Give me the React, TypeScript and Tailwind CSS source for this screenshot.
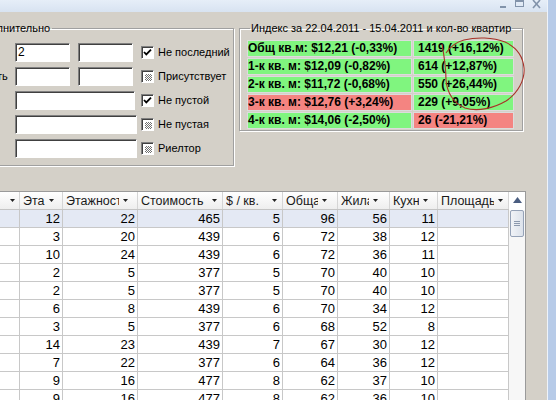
import React from "react"

const rows: number[][] = [
  [12, 22, 465, 5, 96, 56, 11],
  [3, 20, 439, 6, 72, 38, 12],
  [10, 24, 439, 6, 72, 36, 11],
  [2, 5, 377, 5, 70, 40, 10],
  [2, 5, 377, 5, 70, 40, 10],
  [6, 8, 439, 6, 70, 34, 12],
  [3, 5, 377, 6, 68, 52, 8],
  [14, 23, 439, 7, 67, 30, 12],
  [7, 22, 377, 6, 64, 36, 12],
  [9, 16, 477, 8, 62, 37, 10],
  [9, 16, 477, 8, 62, 36, 10],
]

// header arrows sit at slightly different offsets in every column
const cols = [
  { label: "", w: "w-[20px]", pr: "pr-[4px]" },
  { label: "Эта", w: "w-[43px]", pr: "pr-[8px]" },
  { label: "Этажность", w: "w-[75px]", pr: "pr-[9px]" },
  { label: "Стоимость", w: "w-[85px]", pr: "pr-[5px]" },
  { label: "$ / кв.", w: "w-[60px]", pr: "pr-[5px]" },
  { label: "Общая", w: "w-[55px]", pr: "pr-[10px]" },
  { label: "Жилая", w: "w-[52px]", pr: "pr-[11px]" },
  { label: "Кухня", w: "w-[48px]", pr: "pr-[9px]" },
  { label: "Площадь", w: "w-[71px]", pr: "pr-[5px]" },
]

const index = [
  { left: "Общ кв.м: $12,21 (-0,33%)", right: "1419 (+16,12%)", lr: false, rr: false },
  { left: "1-к кв. м: $12,09 (-0,82%)", right: "614 (+12,87%)", lr: false, rr: false },
  { left: "2-к кв. м: $11,72 (-0,68%)", right: "550 (+26,44%)", lr: false, rr: false },
  { left: "3-к кв. м: $12,76 (+3,24%)", right: "229 (+9,05%)", lr: true, rr: false },
  { left: "4-к кв. м: $14,06 (-2,50%)", right: "26 (-21,21%)", lr: false, rr: true },
]

const Arrow = () => (
  <svg width="5" height="3" viewBox="0 0 5 3" className="shrink-0 ml-[4px]">
    <polygon points="0,0 5,0 2.5,3" fill="#222" />
  </svg>
)

const TextBox = ({ w, value }: { w: string; value?: string }) => (
  <div
    className={`${w} h-[19px] bg-white border border-t-[#808080] border-l-[#808080] border-b-white border-r-white shadow-[inset_1px_1px_0_#404040] pl-[2px] pt-[1px] text-[12px] leading-[14px]`}
  >
    {value}
  </div>
)

const Check = ({ state }: { state: "on" | "mixed" }) => (
  <div className="w-[13px] h-[13px] shrink-0 bg-white border border-t-[#808080] border-l-[#808080] border-b-white border-r-white shadow-[inset_1px_1px_0_#404040] flex items-center justify-center">
    {state === "on" ? (
      <svg width="9" height="9" viewBox="0 0 9 9">
        <path d="M1 4 L3.3 6.4 L8 1.6" stroke="#000" strokeWidth="1.8" fill="none" />
      </svg>
    ) : (
      <div className="w-[7px] h-[7px] ml-[1px] mt-[1px] bg-[repeating-conic-gradient(#707070_0_25%,#ffffff_0_50%)] bg-[length:2px_2px]" />
    )}
  </div>
)

const FilterRow = ({
  label,
  wide,
  value,
  state,
  text,
}: {
  label: string
  wide?: string
  value?: string
  state: "on" | "mixed"
  text: string
}) => (
  <div className="flex items-center h-[19px]">
    <span className="w-[68px] shrink-0 pl-[6px] text-[11px] whitespace-nowrap">{label}</span>
    <div className="w-[126px] shrink-0 flex gap-[8px]">
      {wide ? (
        <TextBox w={wide} />
      ) : (
        <>
          <TextBox w="w-[55px]" value={value} />
          <TextBox w="w-[55px]" />
        </>
      )}
    </div>
    <Check state={state} />
    <span className="ml-[4px] text-[11px] whitespace-nowrap">{text}</span>
  </div>
)

export default function App() {
  return (
    <div className="relative w-[556px] h-[400px] overflow-hidden flex bg-[#d4d0c8] text-black font-['Liberation_Sans',Arial,sans-serif]">
      <div className="flex-1 min-w-0 flex flex-col">
        {/* window caption remains */}
        <div className="h-[12px] shrink-0 bg-gradient-to-b from-[#e6eef8] to-[#d8e3f1] flex justify-end pr-[2px]">
          <svg width="50" height="12" viewBox="0 0 50 12">
            <rect x="5" y="6" width="6" height="2" fill="#8293aa" />
            <rect x="20.5" y="0.5" width="8" height="6" stroke="#8293aa" fill="none" />
            <rect x="20" y="0" width="9" height="2" fill="#8293aa" />
            <path d="M38 0 L45 8 M45 0 L38 8" stroke="#8293aa" strokeWidth="1.6" />
          </svg>
        </div>

        <div className="flex items-start pt-[9px] shrink-0">
          <fieldset className="ml-[-64px] w-[298px] shrink-0 border border-[#a0a0a0] shadow-[inset_1px_1px_0_#fff,1px_1px_0_#fff] pl-[10px] pb-[7px]">
            <legend className="ml-[22px] px-[2px] text-[11px] leading-[14px]">Дополнительно</legend>
            <div className="flex flex-col gap-[5px] pt-[8px]">
              <FilterRow label="Этаж" value="2" state="on" text="Не последний" />
              <FilterRow label="Этажность" state="mixed" text="Присутствует" />
              <FilterRow label="Телефон" wide="w-[120px]" state="on" text="Не пустой" />
              <FilterRow label="Улица" wide="w-[122px]" state="mixed" text="Не пустая" />
              <FilterRow label="Агент" wide="w-[122px]" state="mixed" text="Риелтор" />
            </div>
          </fieldset>

          <fieldset className="ml-[5px] w-[284px] shrink-0 border border-[#a0a0a0] shadow-[inset_1px_1px_0_#fff,1px_1px_0_#fff] px-[7px] pb-[1px]">
            <legend className="ml-[3px] px-[1px] text-[11px] leading-[14px] whitespace-nowrap">
              Индекс за 22.04.2011 - 15.04.2011 и кол-во квартир
            </legend>
            <div className="grid grid-cols-[165px_101px] gap-[1px] pt-[5px]">
              {index.map((r) => (
                <React.Fragment key={r.left}>
                  <div
                    className={`h-[17px] border border-[#dcdcdc] text-[12px] font-bold leading-[15px] whitespace-nowrap ${
                      r.lr ? "bg-[#f48481]" : "bg-[#80f57f]"
                    }`}
                  >
                    {r.left}
                  </div>
                  <div
                    className={`h-[17px] border border-[#dcdcdc] pl-[4px] text-[12px] font-bold leading-[15px] whitespace-nowrap ${
                      r.rr ? "bg-[#f48481]" : "bg-[#80f57f]"
                    }`}
                  >
                    {r.right}
                  </div>
                </React.Fragment>
              ))}
            </div>
          </fieldset>
        </div>

        {/* grid */}
        <div className="mt-[25px] w-[526px] flex border-t border-r border-[#9a9a9a] bg-white text-[13px]">
          <div className="flex flex-col">
            <div className="flex h-[18px] border-b border-[#c4c4c4] bg-gradient-to-b from-white to-[#eeeeee] text-[12.5px]">
              {cols.map((c, i) => (
                <div
                  key={i}
                  className={`${c.w} ${c.pr} flex items-center justify-end pl-[3px] border-r border-[#d5d5d5] text-[#1a1a1a]`}
                >
                  <span className="flex-1 min-w-0 overflow-hidden whitespace-nowrap leading-[16px]">{c.label}</span>
                  <Arrow />
                </div>
              ))}
            </div>
            {rows.map((r, ri) => (
              <div
                key={ri}
                className={`flex h-[18px] shrink-0 border-b border-[#c8c8c8] ${ri === 0 ? "bg-[#e4e9f4]" : ""}`}
              >
                <div className="w-[20px] border-r border-[#c8c8c8]" />
                {r.map((v, ci) => (
                  <div
                    key={ci}
                    className={`${cols[ci + 1].w} border-r border-[#c8c8c8] text-right pr-[2px] leading-[17px]`}
                  >
                    {v}
                  </div>
                ))}
                <div className="w-[71px] border-r border-[#c8c8c8]" />
              </div>
            ))}
          </div>
          {/* scrollbar */}
          <div className="w-[16px] shrink-0 flex flex-col bg-[#f7f7f7]">
            <div className="h-[18px] flex items-start justify-center pt-[5px] bg-white">
              <svg width="9" height="6" viewBox="0 0 9 6">
                <polygon points="0,6 9,6 4.5,0" fill="#4a5d80" />
              </svg>
            </div>
            <div className="mx-[1px] h-[27px] rounded-[2px] border border-[#95a2b7] bg-gradient-to-r from-[#f1f3f7] to-[#dce2eb] flex flex-col items-center justify-center gap-[1px]">
              <div className="w-[6px] h-px bg-[#8c99ae]" />
              <div className="w-[6px] h-px bg-[#8c99ae]" />
              <div className="w-[6px] h-px bg-[#8c99ae]" />
            </div>
          </div>
        </div>
      </div>

      {/* window right frame */}
      <div className="w-[9px] shrink-0 border-l border-[#eef3fa] bg-[#b7cbe8]" />

      {/* hand drawn circle */}
      <svg className="absolute inset-0 pointer-events-none" width="556" height="400" viewBox="0 0 556 400">
        <path
          d="M442 44 C444 55, 446 68, 446 80 C447 92, 452 102, 465 108 C478 112, 494 108, 506 101 C518 93, 525 80, 524 68 C523 56, 516 47, 505 42 C493 37, 476 37, 464 40 C456 42, 450 47, 446 53"
          stroke="#a83228"
          strokeWidth="1.1"
          fill="none"
        />
      </svg>
    </div>
  )
}
